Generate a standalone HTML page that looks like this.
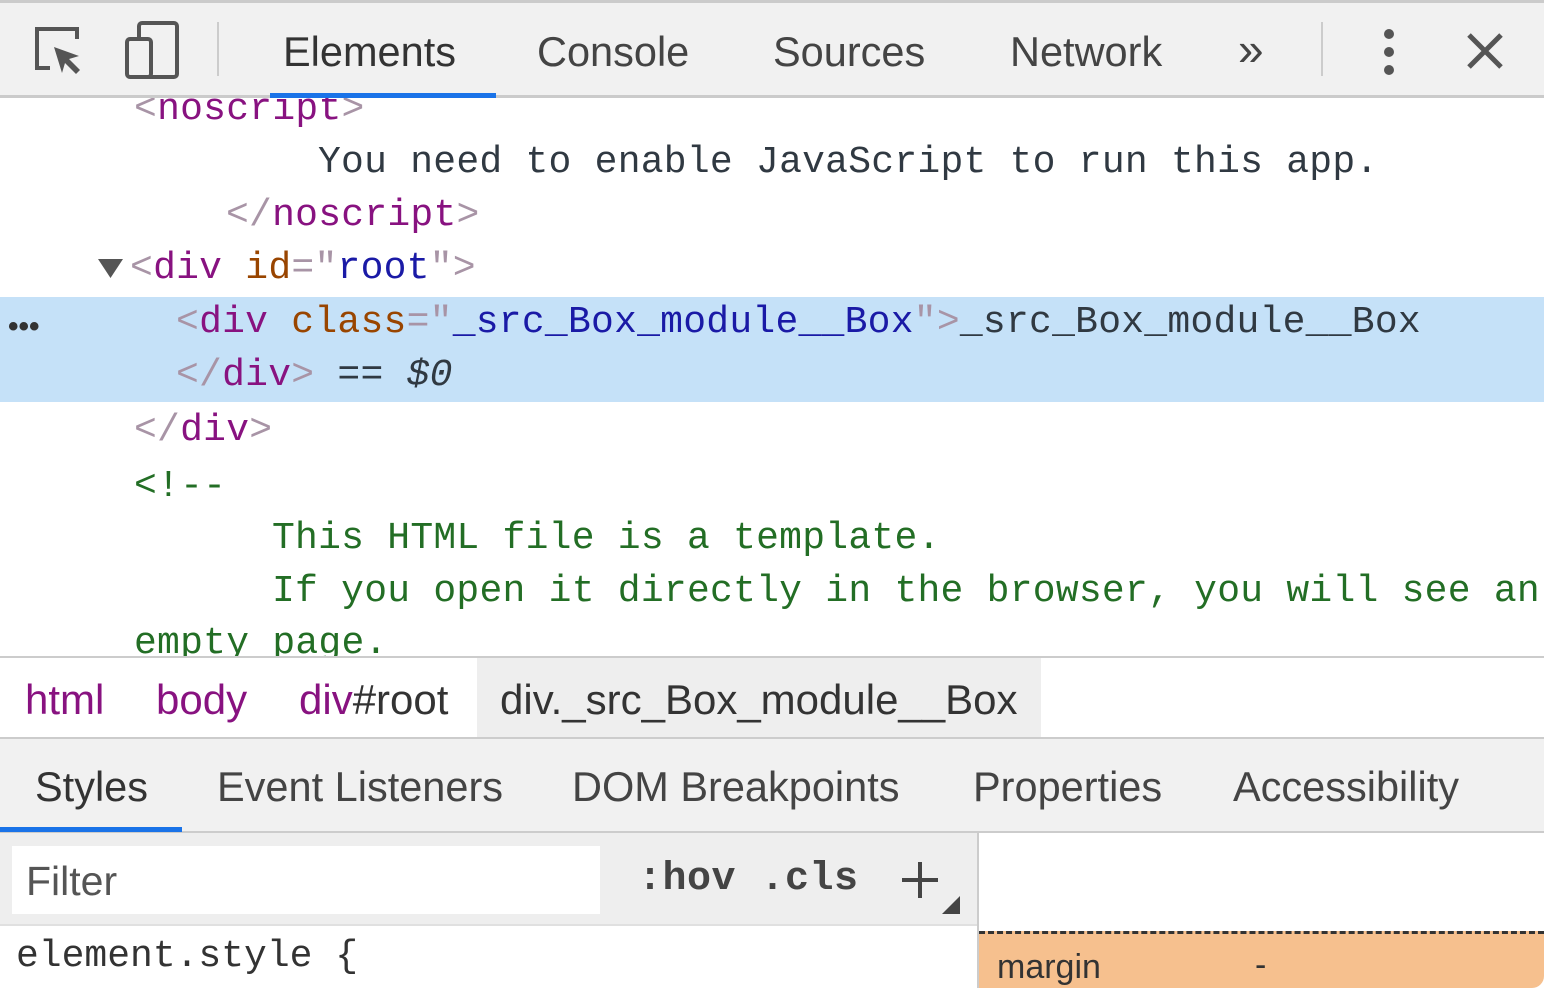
<!DOCTYPE html>
<html><head><style>
*{margin:0;padding:0;box-sizing:border-box}
body{width:1544px;height:988px;overflow:hidden;background:#fff;position:relative;font-family:"Liberation Sans",sans-serif}
.abs{position:absolute}
.tb{left:0;top:0;width:1544px;height:98px;background:#f1f1f1;border-top:3px solid #cbcbcb;border-bottom:3px solid #cbcbcb}
.tab{position:absolute;top:28px;font-size:41.5px;color:#444;white-space:nowrap}
.bt{position:absolute;top:763px;font-size:41.5px;color:#444;white-space:nowrap}
.ln{position:absolute;font-family:"Liberation Mono",monospace;font-size:38px;letter-spacing:0.25px;white-space:pre;line-height:53px;color:#303942}
.t{color:#881280}.b{color:#a894a6}.an{color:#994500}.av{color:#1a1aa6}.c{color:#236e25}
</style></head><body>
<div class="abs tb"></div>
<svg class="abs" style="left:34px;top:26px" width="52" height="52" viewBox="0 0 52 52"><path d="M16 42H3V3h40v10" fill="none" stroke="#555" stroke-width="4"/><path d="M20 21l25 9-10 3 11 11-4 4-11-11-3 10z" fill="#555"/></svg>
<svg class="abs" style="left:124px;top:21px" width="56" height="58" viewBox="0 0 56 58"><rect x="15" y="2" width="38" height="54" rx="3" fill="none" stroke="#555" stroke-width="4"/><rect x="3" y="18" width="24" height="38" rx="3" fill="#f1f1f1" stroke="#555" stroke-width="4"/></svg>
<div class="abs" style="left:217px;top:22px;width:2px;height:54px;background:#ccc"></div>
<div class="tab" style="left:283px;color:#333">Elements</div>
<div class="abs" style="left:270px;top:93px;width:226px;height:5px;background:#1a73e8"></div>
<div class="tab" style="left:537px">Console</div>
<div class="tab" style="left:773px">Sources</div>
<div class="tab" style="left:1010px">Network</div>
<div class="tab" style="left:1238px;top:22px;font-size:46px">»</div>
<div class="abs" style="left:1321px;top:22px;width:2px;height:54px;background:#ccc"></div>
<svg class="abs" style="left:1378px;top:28px" width="22" height="48"><circle cx="11" cy="6" r="5" fill="#555"/><circle cx="11" cy="24" r="5" fill="#555"/><circle cx="11" cy="42" r="5" fill="#555"/></svg>
<svg class="abs" style="left:1466px;top:32px" width="38" height="38"><path d="M3 3L35 35M35 3L3 35" stroke="#555" stroke-width="5"/></svg>

<div class="abs" style="left:0;top:297px;width:1544px;height:105px;background:#c5e1f8"></div>
<div class="abs" style="left:0;top:98px;width:1544px;height:559px;overflow:hidden">
<div class="ln" style="left:134px;top:-15px"><span class="b">&lt;</span><span class="t">noscript</span><span class="b">&gt;</span></div>
<div class="ln" style="left:318px;top:38px">You need to enable JavaScript to run this app.</div>
<div class="ln" style="left:226px;top:91px"><span class="b">&lt;/</span><span class="t">noscript</span><span class="b">&gt;</span></div>
<div class="ln" style="left:130px;top:144px"><span class="b">&lt;</span><span class="t">div</span> <span class="an">id</span><span class="b">="</span><span class="av">root</span><span class="b">"&gt;</span></div>
<div class="ln" style="left:176px;top:198px"><span class="b">&lt;</span><span class="t">div</span> <span class="an">class</span><span class="b">="</span><span class="av">_src_Box_module__Box</span><span class="b">"&gt;</span>_src_Box_module__Box</div>
<div class="ln" style="left:176px;top:251px"><span class="b">&lt;/</span><span class="t">div</span><span class="b">&gt;</span> == <i>$0</i></div>
<div class="ln" style="left:134px;top:306px"><span class="b">&lt;/</span><span class="t">div</span><span class="b">&gt;</span></div>
<div class="ln c" style="left:134px;top:362px">&lt;!--</div>
<div class="ln c" style="left:272px;top:414px">This HTML file is a template.</div>
<div class="ln c" style="left:272px;top:467px">If you open it directly in the browser, you will see an</div>
<div class="ln c" style="left:134px;top:519px">empty page.</div>
</div>
<svg class="abs" style="left:98px;top:257px" width="26" height="22"><path d="M0 2h25L12.5 21z" fill="#555"/></svg>
<div class="abs" style="left:8px;top:310px;font-size:30px;color:#333;font-weight:bold">•••</div>

<div class="abs" style="left:0;top:656px;width:1544px;height:2px;background:#ccc"></div>
<div class="abs" style="left:477px;top:658px;width:564px;height:79px;background:#eee"></div>
<div class="abs" style="left:0;top:676px;font-size:42px;white-space:nowrap">
<span class="abs t" style="left:25px">html</span><span class="abs t" style="left:156px">body</span><span class="abs" style="left:299px;color:#881280">div<span style="color:#333">#root</span></span><span class="abs" style="left:500px;color:#333">div._src_Box_module__Box</span></div>
<div class="abs" style="left:0;top:737px;width:1544px;height:96px;background:#f1f1f1;border-top:2px solid #ccc;border-bottom:2px solid #ccc"></div>
<div class="bt" style="left:35px;color:#333">Styles</div>
<div class="bt" style="left:217px">Event Listeners</div>
<div class="bt" style="left:572px">DOM Breakpoints</div>
<div class="bt" style="left:973px">Properties</div>
<div class="bt" style="left:1233px">Accessibility</div>
<div class="abs" style="left:0;top:827px;width:182px;height:5px;background:#1a73e8"></div>
<div class="abs" style="left:0;top:833px;width:977px;height:93px;background:#eee;border-bottom:2px solid #e0e0e0"></div>
<div class="abs" style="left:12px;top:846px;width:588px;height:68px;background:#fff"></div>
<div class="abs" style="left:26px;top:858px;font-size:41px;color:#555">Filter</div>
<div class="abs" style="left:638px;top:857px;font-family:'Liberation Mono',monospace;font-size:40px;letter-spacing:0.5px;font-weight:bold;color:#444;white-space:pre">:hov .cls</div>
<svg class="abs" style="left:902px;top:862px" width="60" height="54"><path d="M18 0v36M0 18h36" stroke="#444" stroke-width="4"/><path d="M58 34v18H40z" fill="#444"/></svg>
<div class="abs" style="left:977px;top:833px;width:2px;height:155px;background:#ccc"></div>
<div class="abs" style="left:979px;top:931px;width:565px;height:57px;background:#f6c08e;border-top:3px dashed #333;border-bottom-right-radius:12px"></div>
<div class="abs" style="left:997px;top:948px;font-size:34px;color:#333">margin</div>
<div class="abs" style="left:1255px;top:946px;font-size:34px;color:#333">-</div>
<div class="abs" style="left:16px;top:935px;font-family:'Liberation Mono',monospace;font-size:38px;color:#333;white-space:pre">element.style {</div>
</body></html>
